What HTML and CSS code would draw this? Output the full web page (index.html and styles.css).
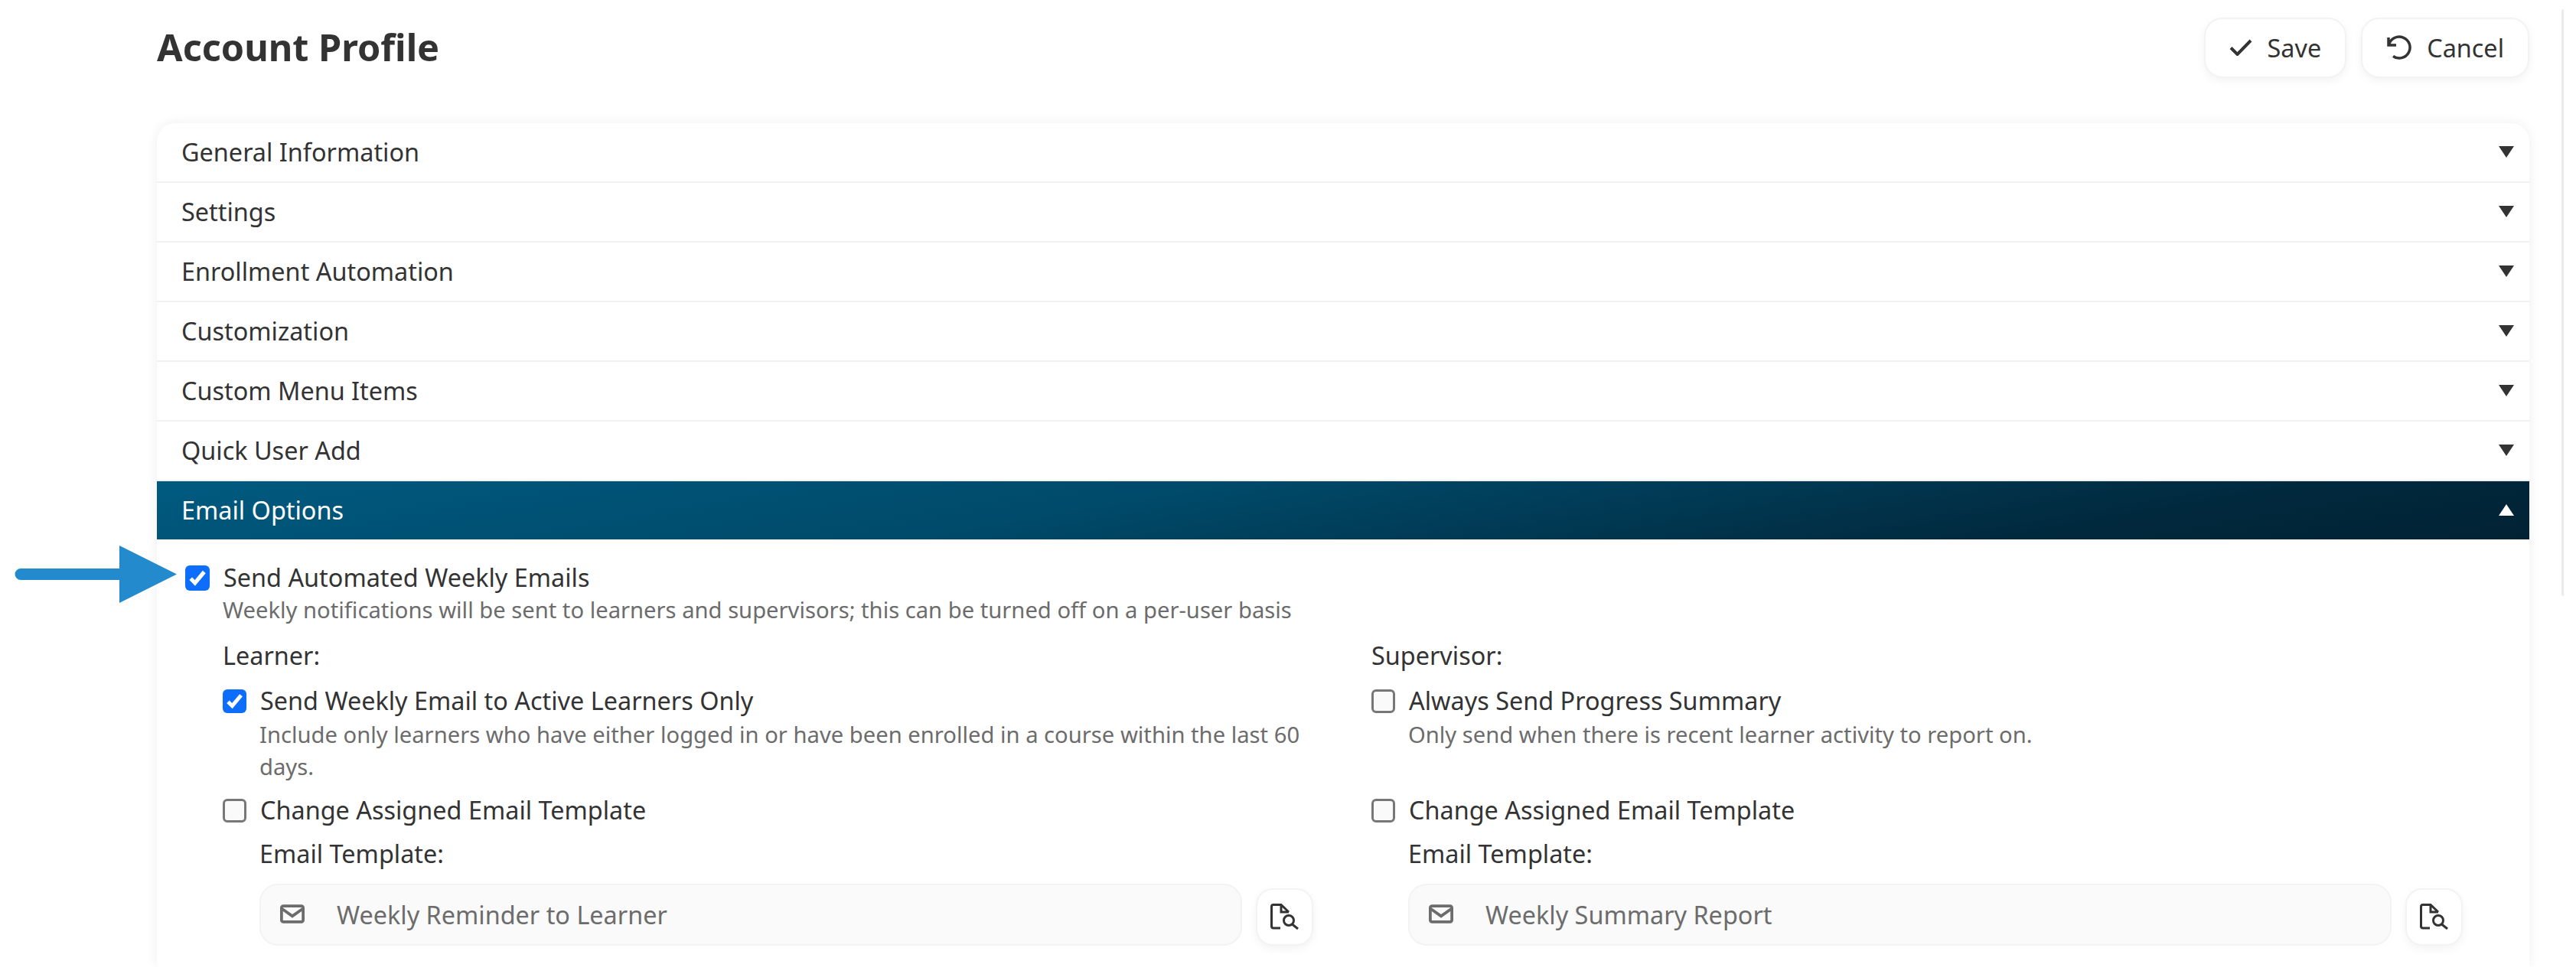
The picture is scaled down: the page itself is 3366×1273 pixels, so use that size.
FILE: index.html
```html
<!DOCTYPE html>
<html lang="en">
<head>
  <meta charset="UTF-8">
  <meta name="viewport" content="width=device-width, initial-scale=1.0">
  <title>Account Profile</title>
  <link rel="stylesheet" href="styles.css">
</head>
<body>
  <div class="page-edge"></div>

  <header class="page-header">
    <h1>Account Profile</h1>
    <div class="page-actions">
      <button class="action-button save-button">
        <svg class="action-icon" width="30" height="22" viewBox="0 0 30 22"><path d="M2 11.5 L10.5 20 L28 2" fill="none" stroke="#333" stroke-width="4"/></svg>
        Save
      </button>
      <button class="action-button cancel-button">
        <svg class="action-icon" width="34" height="32" viewBox="0 0 34 32"><path d="M3 3 V13 H13 M3.5 12.5 A14 14 0 1 1 9 27.5" fill="none" stroke="#333" stroke-width="3.5"/></svg>
        Cancel
      </button>
    </div>
  </header>

  <div class="accordion">
    <div class="accordion-item">General Information<span class="caret"></span></div>
    <div class="accordion-item">Settings<span class="caret"></span></div>
    <div class="accordion-item">Enrollment Automation<span class="caret"></span></div>
    <div class="accordion-item">Customization<span class="caret"></span></div>
    <div class="accordion-item">Custom Menu Items<span class="caret"></span></div>
    <div class="accordion-item">Quick User Add<span class="caret"></span></div>
    <div class="accordion-item open">Email Options<span class="caret up"></span></div>

    <div class="accordion-body">
      <label class="check-row main-check">
        <input type="checkbox" checked>
        <span>Send Automated Weekly Emails</span>
      </label>
      <p class="hint main-hint">Weekly notifications will be sent to learners and supervisors; this can be turned off on a per-user basis</p>

      <div class="email-columns">
        <div class="email-column">
          <div class="column-title">Learner:</div>
          <label class="check-row">
            <input type="checkbox" checked>
            <span>Send Weekly Email to Active Learners Only</span>
          </label>
          <p class="hint indented">Include only learners who have either logged in or have been enrolled in a course within the last 60 days.</p>
          <label class="check-row template-check">
            <input type="checkbox">
            <span>Change Assigned Email Template</span>
          </label>
          <div class="field-label indented">Email Template:</div>
          <div class="template-field indented">
            <div class="template-input">
              <svg class="mail-icon" width="32" height="25" viewBox="0 0 34 26"><rect x="2" y="2" width="30" height="22" rx="2.5" fill="none" stroke="#6c6c6c" stroke-width="4"/><path d="M3 6 L17 16 L31 6" fill="none" stroke="#6c6c6c" stroke-width="4"/></svg>
              Weekly Reminder to Learner
            </div>
            <button class="search-button">
              <svg width="38" height="34" viewBox="0 0 38 34"><path d="M13 32 H4 Q1.5 32 1.5 29.5 V4 Q1.5 1.5 4 1.5 H14 L24 11 M14 1.5 V11 H24" fill="none" stroke="#333" stroke-width="3"/><circle cx="24" cy="22" r="6.5" fill="none" stroke="#333" stroke-width="3"/><path d="M28.5 27 L36 33" fill="none" stroke="#333" stroke-width="3"/></svg>
            </button>
          </div>
        </div>

        <div class="email-column">
          <div class="column-title">Supervisor:</div>
          <label class="check-row">
            <input type="checkbox">
            <span>Always Send Progress Summary</span>
          </label>
          <p class="hint indented reserve-lines">Only send when there is recent learner activity to report on.</p>
          <label class="check-row template-check">
            <input type="checkbox">
            <span>Change Assigned Email Template</span>
          </label>
          <div class="field-label indented">Email Template:</div>
          <div class="template-field indented">
            <div class="template-input">
              <svg class="mail-icon" width="32" height="25" viewBox="0 0 34 26"><rect x="2" y="2" width="30" height="22" rx="2.5" fill="none" stroke="#6c6c6c" stroke-width="4"/><path d="M3 6 L17 16 L31 6" fill="none" stroke="#6c6c6c" stroke-width="4"/></svg>
              Weekly Summary Report
            </div>
            <button class="search-button">
              <svg width="38" height="34" viewBox="0 0 38 34"><path d="M13 32 H4 Q1.5 32 1.5 29.5 V4 Q1.5 1.5 4 1.5 H14 L24 11 M14 1.5 V11 H24" fill="none" stroke="#333" stroke-width="3"/><circle cx="24" cy="22" r="6.5" fill="none" stroke="#333" stroke-width="3"/><path d="M28.5 27 L36 33" fill="none" stroke="#333" stroke-width="3"/></svg>
            </button>
          </div>
        </div>
      </div>
    </div>
  </div>

  <!-- callout pointing at the first checkbox -->
  <svg class="callout-arrow" width="216" height="76" viewBox="0 0 216 76"><path d="M8 30 H137 V0 L212 37.5 L137 75 V45 H8 A7.5 7.5 0 0 1 8 30 Z" fill="#238bcd"/></svg>
</body>
</html>
```

FILE: styles.css
```css
html {
  background-color: #ffffff;
}

body {
  display: flex;
  flex-direction: column;
  height: 1263px;
  margin: 0;
  padding: 0 61px 0 205px;
  box-sizing: border-box;
  overflow: hidden;
  position: relative;
  background-color: #ffffff;
  color: #333333;
  font-family: "Noto Sans", sans-serif;
  font-size: 32.4px;
  line-height: 48px;
}

.page-edge {
  position: absolute;
  top: 12px;
  right: 16px;
  width: 3px;
  height: 767px;
  border-radius: 3px 0 0 3px;
  background-color: #ebebeb;
}

.page-header {
  flex: none;
  display: flex;
  justify-content: space-between;
  height: 161px;
  padding-top: 23px;
  box-sizing: border-box;
}

h1 {
  margin: 0;
  padding-top: 8px;
  font-size: 48.6px;
  line-height: 60px;
  font-weight: 700;
  color: #333333;
}

.page-actions {
  display: flex;
  gap: 19px;
  height: 79px;
}

.action-button {
  display: flex;
  align-items: center;
  gap: 19px;
  padding: 0 31px 2px;
  border: 2px solid #f3f3f3;
  border-radius: 24px;
  background: white;
  color: #333333;
  font: inherit;
  box-shadow: 0 4px 12px rgba(0,0,0,0.05);
}

.accordion {
  flex: 1;
  min-height: 0;
  background: white;
  border-radius: 24px 24px 0 0;
  box-shadow: 0 0 16px rgba(0,0,0,0.07);
}

.accordion-item {
  display: flex;
  align-items: center;
  justify-content: space-between;
  height: 78px;
  padding: 0 20px 2px 32px;
  box-sizing: border-box;
  border-bottom: 2px solid #f1f1f1;
}

.accordion-item.open {
  height: 76px;
  padding-bottom: 2px;
  border-bottom: none;
  color: white;
  background: linear-gradient(170deg, #005a80 0%, #004a6a 40%, #01293e 80%, #012233 100%);
}

.caret {
  width: 0;
  height: 0;
  border-left: 10.5px solid transparent;
  border-right: 10.5px solid transparent;
  border-top: 15px solid #333333;
}

.caret.up {
  border-top: none;
  border-bottom: 15px solid white;
}

.accordion-body {
  padding: 25px 87px 0 37px;
}

.check-row {
  display: flex;
  align-items: center;
  gap: 18px;
}

input[type="checkbox"] {
  appearance: none;
  flex: none;
  width: 31px;
  height: 31px;
  margin: 2px 0 0;
  box-sizing: border-box;
  border: 3.5px solid #777777;
  border-radius: 6px;
  background-color: #fafafa;
}

input[type="checkbox"]:checked {
  border: none;
  background-color: #0d6efd;
  background-image: url("data:image/svg+xml,%3csvg xmlns='http://www.w3.org/2000/svg' viewBox='0 0 20 20'%3e%3cpath fill='none' stroke='%23fff' stroke-width='3.2' d='m4.5 10.5 3.5 3.5 7.5-9'/%3e%3c/svg%3e");
  background-size: 100% 100%;
}

.main-check input[type="checkbox"] {
  width: 32px;
  height: 33px;
}

.hint {
  margin: 0;
  font-size: 29.2px;
  line-height: 42px;
  color: #6c6c6c;
}

.main-hint {
  margin: -2px 0 0 49px;
}

.email-columns {
  display: grid;
  grid-template-columns: 1425px 1426px;
  gap: 76px;
  margin: 14px 0 0 49px;
}

.column-title {
  margin-bottom: 11px;
}

.indented {
  margin-left: 48px;
}

.reserve-lines {
  min-height: 84px;
}

.template-check {
  margin-top: 11px;
}

.field-label {
  margin-top: 9px;
}

.template-field {
  display: flex;
  align-items: center;
  gap: 18px;
  margin-top: 16px;
}

.template-input {
  flex: 1;
  display: flex;
  align-items: center;
  gap: 42px;
  height: 81px;
  padding: 0 0 2px 25px;
  box-sizing: border-box;
  border: 2px solid #f3f3f3;
  border-radius: 24px;
  background-color: #fafafa;
  color: #6c6c6c;
}

.search-button {
  flex: none;
  display: flex;
  align-items: center;
  justify-content: center;
  width: 75px;
  height: 75px;
  margin-top: 5px;
  padding: 0;
  border: 2px solid #f3f3f3;
  border-radius: 22px;
  background: white;
  box-shadow: 0 4px 12px rgba(0,0,0,0.05);
}

.callout-arrow {
  position: absolute;
  left: 19px;
  top: 713px;
}
```
